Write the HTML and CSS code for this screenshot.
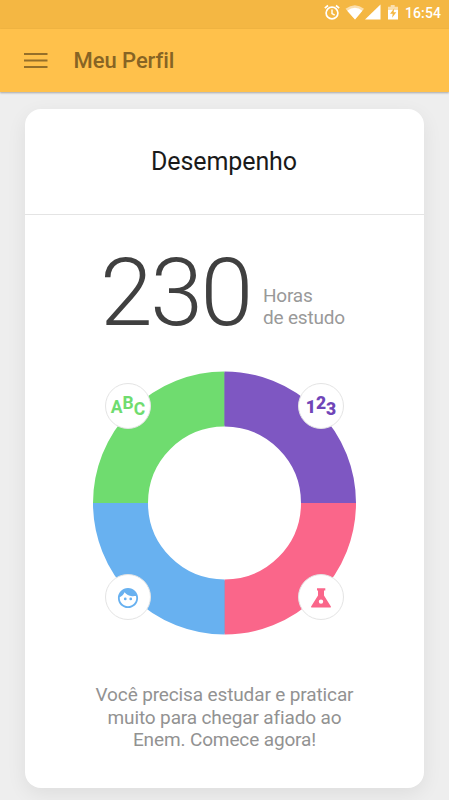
FILE: index.html
```html
<!DOCTYPE html>
<html lang="pt-BR">
<head>
<meta charset="utf-8">
<title>Meu Perfil</title>
<link rel="stylesheet" href="styles.css">
</head>
<body>
<div class="status">
  <svg class="status-icons" width="78" height="18" viewBox="0 0 78 18" fill="none" stroke="#fff">
    <circle cx="8" cy="9" r="5.900" stroke-width="1.700"/>
    <path d="M8 5.500v4l2.700 1.600" stroke-width="1.400"/>
    <path d="M.8 4.200 4 1.500M15.200 4.200 12 1.500" stroke-width="1.700"/>
    <path d="M21.500 4.700Q31 -2.300 40 4.700L31 15.500Z" fill="#fbdfae" stroke="none"/>
    <path d="M23.200 6.700Q31 1 38.400 6.700L31 15.500Z" fill="#fff" stroke="none"/>
    <path d="M56.500 .5v15H41Z" fill="#fff" stroke="none"/>
    <path d="M64 2.700h2.700V1h4v1.700H74V8H64Z" fill="#fbdfae" stroke="none"/>
    <path d="M64 6h10v9.500H64Z" fill="#fff" stroke="none"/>
    <path d="M70.300 4.300 66 9.800h2.700l-.6 4 4.200-5.500h-2.700Z" fill="#f4b743" stroke="none"/>
  </svg>
  <span class="clock">16:54</span>
</div>
<header class="appbar">
  <svg class="menu" width="24" height="18" viewBox="0 0 24 18"><path d="M0 2h23.500M0 8.500h23.500M0 15h23.500" stroke="#956f29" stroke-width="2"/></svg>
  <h1 class="title">Meu Perfil</h1>
</header>
<main class="card">
  <h2 class="heading">Desempenho</h2>
  <section class="hours">
    <strong class="total">230</strong>
    <p class="unit">Horas<br>de estudo</p>
  </section>
  <div class="chart">
    <svg class="ring" width="265" height="264" viewBox="-132.500 -132 265 264" fill="none" stroke-width="55">
      <circle r="104" stroke="#8a90b4" stroke-width="53"/>
      <path d="M-104 0A104 104 0 0 1 0-104" stroke="#6fdc6f"/>
      <path d="M0-104A104 104 0 0 1 104 0" stroke="#7e57c2"/>
      <path d="M104 0A104 104 0 0 1 0 104" stroke="#fa668a"/>
      <path d="M0 104A104 104 0 0 1-104 0" stroke="#68b1f0"/>
    </svg>
    <div class="badge letters"><span>A</span><span class="up">B</span><span class="low">C</span></div>
    <div class="badge numbers"><span>1</span><span class="up">2</span><span class="low">3</span></div>
    <div class="badge human">
      <svg width="22" height="22" viewBox="0 0 24 24" fill="#68b1f0"><path d="M9 11.500a1.500 1.500 0 1 0 0 3 1.500 1.500 0 0 0 0-3zm6 0a1.500 1.500 0 1 0 0 3 1.500 1.500 0 0 0 0-3zM12 1C5.900 1 1 5.900 1 12s4.900 11 11 11 11-4.900 11-11S18.100 1 12 1zm0 20c-5 0-9-4-9-9 0-.3 0-.6.05-.85 2.400-1.050 4.250-3 5.200-5.400C10.100 8.300 13.100 10 16.500 10c.8 0 1.550-.1 2.250-.25h1.900c.2.700.35 1.450.35 2.250 0 5-4 9-9 9z"/></svg>
    </div>
    <div class="badge nature">
      <svg width="22" height="22" viewBox="0 0 22 22" fill="#fa668a"><path fill-rule="evenodd" d="M7 1.300h8.300v2.300h-1.300v5l6.900 11a.7.700 0 0 1-.6 1H1.700a.7.700 0 0 1-.6-1l6.900-11v-5H7ZM11 12.400a2.200 2.200 0 1 0 0 4.400 2.200 2.200 0 0 0 0-4.400Z"/></svg>
    </div>
  </div>
  <p class="message">Você precisa estudar e praticar<br>muito para chegar afiado ao<br>Enem. Comece agora!</p>
</main>
</body>
</html>
```
FILE: styles.css
```css
* { box-sizing: border-box; }
body {
  margin: 0;
  height: 800px;
  overflow: hidden;
  background: #eee;
  font-family: Roboto, sans-serif;
}
h1, h2, p { margin: 0; font-weight: 400; }
svg { display: block; }
.status {
  display: flex;
  justify-content: flex-end;
  height: 29px;
  padding: 4px 8px 0 0;
  background: #f4b743;
  color: #fff;
}
.status-icons { margin-right: 3px; }
.clock {
  width: 36px;
  font-size: 14px;
  font-weight: 500;
  line-height: 18px;
  letter-spacing: .1px;
}
.appbar {
  display: flex;
  align-items: center;
  height: 63px;
  padding-left: 24px;
  background: #ffc14b;
  box-shadow: 0 1px 2px rgba(0, 0, 0, .3);
}
.menu { margin-right: 25.500px; }
.title {
  padding-top: 1px;
  color: #876424;
  font-size: 22px;
  font-weight: 500;
  line-height: 26px;
  letter-spacing: -.05px;
}
.card {
  width: 399px;
  height: 679px;
  margin: 17px 0 0 25px;
  border-radius: 16px;
  background: #fff;
  box-shadow: 0 6px 20px rgba(0, 0, 0, .07);
}
.heading {
  height: 106px;
  padding-right: 1px;
  border-bottom: 1px solid #e4e4e4;
  color: #1a1a1a;
  font-size: 25px;
  line-height: 105px;
  letter-spacing: -.1px;
  text-align: center;
}
.hours {
  display: flex;
  height: 156px;
  padding: 22px 0 0 75px;
}
.total {
  width: 163px;
  color: #404040;
  font-size: 95px;
  font-weight: 300;
  line-height: 112px;
  letter-spacing: -2.500px;
}
.unit {
  padding-top: 48px;
  color: #999;
  font-size: 19px;
  line-height: 22px;
  letter-spacing: -.2px;
  white-space: nowrap;
}
.chart {
  position: relative;
  width: 265px;
  height: 264px;
  margin-left: 67px;
}
.badge {
  position: absolute;
  display: flex;
  align-items: center;
  justify-content: center;
  width: 46px;
  height: 46px;
  border: 1px solid #e4e4e4;
  border-radius: 50%;
  background: #fff;
  font-size: 17.500px;
  font-weight: 900;
}
.up { padding-bottom: 9px; }
.low { padding-top: 3px; }
.letters { left: 13px; top: 12px; padding-top: 2px; color: #6fdc6f; font-weight: 700; }
.numbers { left: 206px; top: 12px; padding-top: 2px; color: #7045b8; }
.human { left: 13px; top: 203px; padding-top: 1px; }
.nature { left: 206px; top: 203px; padding-top: 1px; }
.message {
  padding-top: 49px;
  color: #929292;
  font-size: 19px;
  line-height: 22.500px;
  letter-spacing: -.13px;
  text-align: center;
}
```
